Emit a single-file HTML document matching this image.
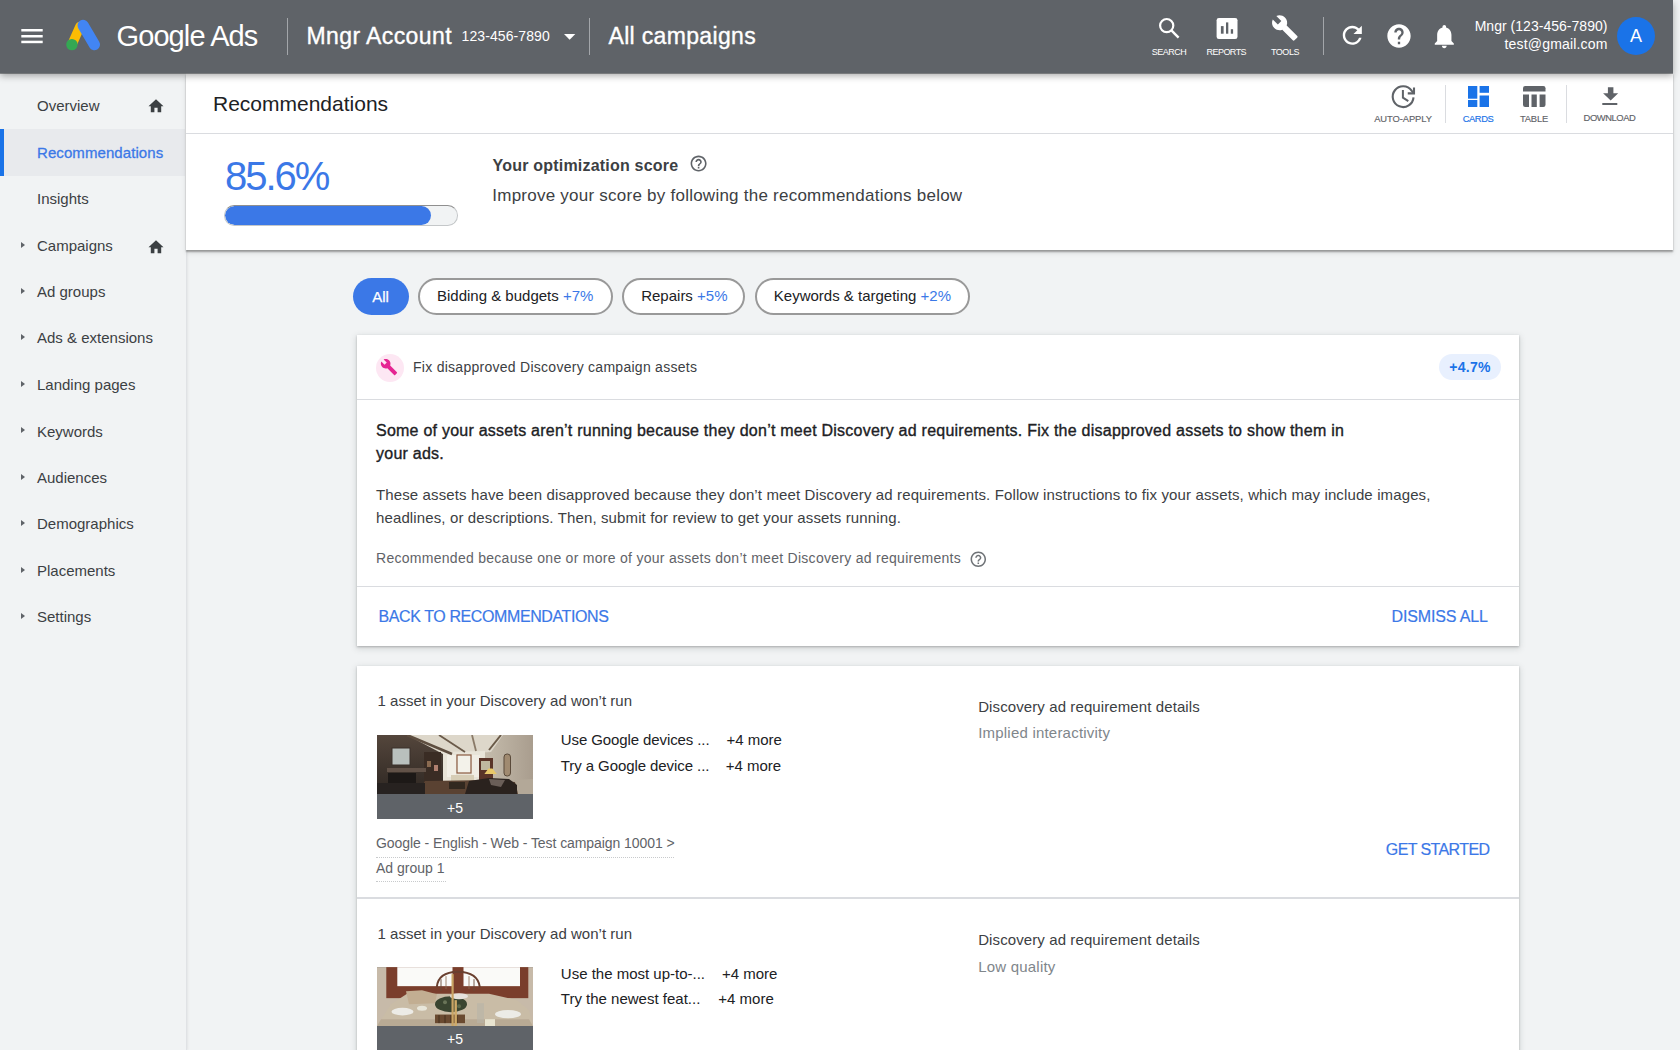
<!DOCTYPE html>
<html><head><meta charset="utf-8">
<style>
*{box-sizing:border-box;margin:0;padding:0}
html,body{width:1680px;height:1050px;overflow:hidden;background:#f1f3f4;font-family:"Liberation Sans",sans-serif;position:relative}
.t{position:absolute;white-space:nowrap;line-height:1}
.s{position:absolute;display:block}
.ph{filter:blur(0.6px)}
#hdr{position:absolute;left:0;top:0;width:1673px;height:73px;background:#5f6368;box-shadow:0 1px 0 rgba(60,64,67,.55),0 3px 7px rgba(0,0,0,.32);z-index:5}
#hdr .t{color:#fff}
.lbl{font-size:9px;color:#fff;text-align:center;width:60px;margin-top:0.6px}
.vd{position:absolute;width:1.2px;background:#a3a6aa}
#side{position:absolute;left:0;top:73px;width:187px;height:977px;background:#f1f3f4;border-right:1px solid #e0e2e5;box-shadow:1px 0 2px rgba(0,0,0,.06);z-index:1}
.nav{font-size:15px;color:#3c4043;left:37px}
.tri{position:absolute;left:21px;width:0;height:0;border-top:3.7px solid transparent;border-bottom:3.7px solid transparent;border-left:4.6px solid #5f6368}
#top{position:absolute;left:185.5px;top:73px;width:1487.5px;height:177px;background:#fff;box-shadow:0 2px 1.5px rgba(0,0,0,.3),0 3px 5px rgba(0,0,0,.1);z-index:2}
#rstrip{position:absolute;left:1673px;top:0;width:7px;height:1050px;background:#f1f3f4;z-index:6;box-shadow:inset 1px 0 2px rgba(0,0,0,.08)}
.tl{font-size:9.4px;color:#5f6368;text-align:center;width:70px;-webkit-text-stroke:0.15px currentColor;margin-top:-0.34px}
.chip{position:absolute;top:278px;height:37px;border:2.3px solid #999;border-radius:19px;background:#fff}
.chip .t{font-size:15px;color:#202124;top:8.3px}
.chip .p{color:#3b78e7}
.card{position:absolute;left:357px;width:1162px;background:#fff;box-shadow:0 1px 2px rgba(60,64,67,.3),0 2px 6px 1px rgba(60,64,67,.15);z-index:1}
.hr{position:absolute;height:1px;background:#dadce0}
</style></head><body>

<div id="hdr">
  <svg class="s" style="left:0;top:0" width="110" height="73">
    <rect x="21.3" y="29" width="21.4" height="2.5" fill="#fff"/>
    <rect x="21.3" y="35" width="21.4" height="2.5" fill="#fff"/>
    <rect x="21.3" y="40.7" width="21.4" height="2.5" fill="#fff"/>
    <!-- logo -->
    <line x1="80" y1="26.5" x2="71.9" y2="44.6" stroke="#fbbc04" stroke-width="9.5" stroke-linecap="round"/>
    <line x1="83.1" y1="25.3" x2="94.4" y2="44.6" stroke="#4285f4" stroke-width="11.2" stroke-linecap="round"/>
    <circle cx="71.9" cy="44.6" r="5.7" fill="#34a853"/>
  </svg>
  <div class="t" style="left:116.5px;top:22.05px;font-size:29px;letter-spacing:-0.9px">Google Ads</div>
  <div class="vd" style="left:287px;top:18px;height:36.5px"></div>
  <div class="t" style="left:306.5px;top:24.9px;font-size:23px;letter-spacing:0.4px;-webkit-text-stroke:0.35px #fff">Mngr Account</div>
  <div class="t" style="left:461.5px;top:29.4px;font-size:14px;letter-spacing:0.1px">123-456-7890</div>
  <svg class="s" style="left:560px;top:30px" width="20" height="14"><polygon points="4,4 15.3,4 9.65,9.8" fill="#fff"/></svg>
  <div class="vd" style="left:589px;top:17.8px;height:36.8px"></div>
  <div class="t" style="left:608.5px;top:25.1px;font-size:23px;letter-spacing:0.33px;-webkit-text-stroke:0.35px #fff">All campaigns</div>

  <!-- search -->
  <svg class="s" style="left:1150px;top:10px" width="40" height="34">
    <circle cx="16.7" cy="15.6" r="6.6" fill="none" stroke="#fff" stroke-width="2.2"/>
    <line x1="21.4" y1="20.4" x2="28.6" y2="27.6" stroke="#fff" stroke-width="2.4"/>
  </svg>
  <div class="t lbl" style="left:1139px;top:47.2px;letter-spacing:-0.5px">SEARCH</div>
  <!-- reports -->
  <svg class="s" style="left:1210px;top:10px" width="34" height="34">
    <rect x="6.6" y="7.9" width="20.9" height="21.1" rx="2.3" fill="#fff"/>
    <rect x="10.9" y="16.1" width="2.7" height="7.6" fill="#5f6368"/>
    <rect x="16" y="12.4" width="2.3" height="11.3" fill="#5f6368"/>
    <rect x="20.8" y="19.2" width="2.3" height="4.5" fill="#5f6368"/>
  </svg>
  <div class="t lbl" style="left:1196.3px;top:47.2px;letter-spacing:-0.55px">REPORTS</div>
  <!-- tools -->
  <svg class="s" style="left:1268px;top:13px" width="34" height="30" viewBox="0 0 34 30">
    <g transform="translate(2.9,1.0) scale(1.16)">
      <path d="M22.7 19l-9.1-9.1c.9-2.3.4-5-1.5-6.9-2-2-5-2.4-7.4-1.3L9 6 6 9 1.6 4.7C.4 7.1.9 10.1 2.9 12.1c1.9 1.9 4.6 2.4 6.9 1.5l9.1 9.1c.4.4 1 .4 1.4 0l2.3-2.3c.5-.4.5-1.1.1-1.4z" fill="#fff"/>
    </g>
  </svg>
  <div class="t lbl" style="left:1255px;top:47.2px;letter-spacing:-0.45px">TOOLS</div>
  <div class="vd" style="left:1323px;top:17px;height:37.7px"></div>
  <!-- refresh -->
  <svg class="s" style="left:1337.8px;top:21.2px" width="28.6" height="28.6" viewBox="0 0 24 24"><path fill="#fff" d="M17.65 6.35C16.2 4.9 14.21 4 12 4c-4.42 0-7.99 3.58-7.99 8s3.57 8 7.99 8c3.73 0 6.84-2.55 7.73-6h-2.08c-.82 2.33-3.04 4-5.65 4-3.31 0-6-2.69-6-6s2.69-6 6-6c1.66 0 3.14.69 4.22 1.78L13 11h7V4l-2.35 2.35z"/></svg>
  <!-- help -->
  <svg class="s" style="left:1384.6px;top:22.1px" width="28" height="28" viewBox="0 0 24 24"><path fill="#fff" d="M12 2C6.48 2 2 6.48 2 12s4.48 10 10 10 10-4.48 10-10S17.52 2 12 2zm1 17h-2v-2h2v2zm2.07-7.75l-.9.92C13.45 12.9 13 13.5 13 15h-2v-.5c0-1.1.45-2.1 1.17-2.83l1.24-1.26c.37-.36.59-.86.59-1.41 0-1.1-.9-2-2-2s-2 .9-2 2H8c0-2.21 1.79-4 4-4s4 1.79 4 4c0 .88-.36 1.68-.93 2.25z"/></svg>
  <!-- bell -->
  <svg class="s" style="left:1430.4px;top:21.7px" width="28.6" height="28.6" viewBox="0 0 24 24"><path fill="#fff" d="M12 22c1.1 0 2-.9 2-2h-4c0 1.1.89 2 2 2zm6-6v-5c0-3.07-1.64-5.64-4.5-6.32V4c0-.83-.67-1.5-1.5-1.5s-1.5.67-1.5 1.5v.68C7.63 5.36 6 7.92 6 11v5l-2 2v1h16v-1l-2-2z"/></svg>
  <div class="t" style="right:65.5px;top:19.05px;font-size:14px;letter-spacing:0.03px">Mngr (123-456-7890)</div>
  <div class="t" style="right:65.5px;top:37.4px;font-size:14px;letter-spacing:0.17px">test@gmail.com</div>
  <div class="s" style="left:1616.8px;top:16.5px;width:38.4px;height:38.4px;border-radius:50%;background:#1a73e8"></div>
  <div class="t" style="left:1616.8px;width:38.4px;text-align:center;top:26.8px;font-size:18px">A</div>
</div>

<div id="side">
  <div class="s" style="left:0;top:55.9px;width:185px;height:47.1px;background:#e8eaed"></div>
  <div class="s" style="left:0;top:55.9px;width:4px;height:47.1px;background:#1a73e8"></div>
</div>
<div id="sidetext" style="position:absolute;left:0;top:0;z-index:3">
  <div class="t nav" style="top:98.3px">Overview</div>
  <div class="t nav" style="top:144.5px;color:#3b78e7;letter-spacing:0.08px;-webkit-text-stroke:0.3px #3b78e7">Recommendations</div>
  <div class="t nav" style="top:191.1px">Insights</div>
  <div class="t nav" style="top:237.6px">Campaigns</div>
  <div class="t nav" style="top:284.1px">Ad groups</div>
  <div class="t nav" style="top:329.8px">Ads &amp; extensions</div>
  <div class="t nav" style="top:377.4px">Landing pages</div>
  <div class="t nav" style="top:423.6px">Keywords</div>
  <div class="t nav" style="top:469.9px">Audiences</div>
  <div class="t nav" style="top:516.2px">Demographics</div>
  <div class="t nav" style="top:563px">Placements</div>
  <div class="t nav" style="top:609.3px">Settings</div>
  <div class="tri" style="top:242px"></div>
  <div class="tri" style="top:288px"></div>
  <div class="tri" style="top:334px"></div>
  <div class="tri" style="top:381px"></div>
  <div class="tri" style="top:427px"></div>
  <div class="tri" style="top:473.5px"></div>
  <div class="tri" style="top:520px"></div>
  <div class="tri" style="top:566.5px"></div>
  <div class="tri" style="top:613px"></div>
  <svg class="s" style="left:146px;top:96px" width="20" height="20" viewBox="0 0 20 20"><path d="M2.5 10.3L10 3.2l7.5 7.1h-2.3v5.9h-3.6v-4.5H8.4v4.5H4.8v-5.9z" fill="#3c4043"/></svg>
  <svg class="s" style="left:146px;top:237px" width="20" height="20" viewBox="0 0 20 20"><path d="M2.5 10.3L10 3.2l7.5 7.1h-2.3v5.9h-3.6v-4.5H8.4v4.5H4.8v-5.9z" fill="#3c4043"/></svg>
</div>

<div id="top">
</div>
<div id="toptext" style="position:absolute;left:0;top:0;z-index:3">
  <div class="t" style="left:213px;top:93.4px;font-size:21px;color:#202124">Recommendations</div>
  <!-- auto-apply -->
  <svg class="s" style="left:1389px;top:83px" width="28" height="28" viewBox="0 0 28 28">
    <path d="M24.5 14.4 A10.4 10.4 0 1 1 22.6 7.6 L25 10.4" fill="none" stroke="#5f6368" stroke-width="2.1"/>
    <polyline points="19.8,10.4 25,10.4 25,5.6" fill="none" stroke="#5f6368" stroke-width="2.1" stroke-linecap="square"/>
    <polyline points="13.9,7.1 13.9,14.6 19.3,18.2" fill="none" stroke="#5f6368" stroke-width="2"/>
  </svg>
  <div class="t tl" style="left:1368px;top:114.7px;letter-spacing:-0.08px">AUTO-APPLY</div>
  <div class="hr" style="left:1445px;top:85px;width:1px;height:38px"></div>
  <!-- cards -->
  <svg class="s" style="left:1467.5px;top:86.2px" width="21.3" height="21" viewBox="0 0 21.3 21">
    <rect x="0" y="0" width="9.3" height="12.7" fill="#1a73e8"/>
    <rect x="0" y="14" width="9.3" height="7" fill="#1a73e8"/>
    <rect x="11.6" y="0" width="9.7" height="6.8" fill="#1a73e8"/>
    <rect x="11.6" y="9.5" width="9.7" height="11.5" fill="#1a73e8"/>
  </svg>
  <div class="t tl" style="left:1443px;top:114.7px;color:#1a73e8;letter-spacing:-0.46px">CARDS</div>
  <!-- table -->
  <svg class="s" style="left:1523.2px;top:86.2px" width="22.5" height="21" viewBox="0 0 22.5 21">
    <path d="M0 2.2Q0 0 2.2 0H20.3Q22.5 0 22.5 2.2V5.55H0z" fill="#5f6368"/>
    <path d="M0 8.5H6V21H2.2Q0 21 0 18.8z" fill="#5f6368"/>
    <rect x="8.5" y="8.5" width="5.3" height="12.5" fill="#5f6368"/>
    <path d="M16.6 8.5H22.5V18.8Q22.5 21 20.3 21H16.6z" fill="#5f6368"/>
  </svg>
  <div class="t tl" style="left:1499px;top:114.5px;letter-spacing:-0.16px">TABLE</div>
  <div class="hr" style="left:1566px;top:85px;width:1px;height:38px"></div>
  <!-- download -->
  <svg class="s" style="left:1600px;top:85px" width="20" height="22" viewBox="0 0 20 22">
    <polygon points="6.4,2.2 11.9,2.2 11.9,8.2 16.7,8.2 9.15,15.5 1.6,8.2 6.4,8.2" fill="#5f6368" transform="translate(1.5,0)"/>
    <rect x="2.3" y="18" width="15" height="2" fill="#5f6368"/>
  </svg>
  <div class="t tl" style="left:1574.5px;top:113.7px;letter-spacing:-0.42px">DOWNLOAD</div>
  <div class="hr" style="left:186px;top:133px;width:1487px"></div>

  <div class="t" style="left:225px;top:156.3px;font-size:40px;letter-spacing:-2px;color:#3b78e7">85.6%</div>
  <div class="s" style="left:224px;top:205px;width:234px;height:20.5px;border-radius:10.25px;background:#f1f3f4;border:1px solid #c4c7c9;border-top-color:#8f8f8f;overflow:hidden">
    <div class="s" style="left:0;top:0;width:206px;height:100%;border-radius:10px;background:#3b78e7"></div>
  </div>
  <div class="t" style="left:492.6px;top:157.6px;font-size:16px;font-weight:bold;color:#3c4043;letter-spacing:0.2px">Your optimization score</div>
  <svg class="s" style="left:689.3px;top:154.4px" width="19.2" height="19.2" viewBox="0 0 24 24"><path fill="#5f6368" d="M11 18h2v-2h-2v2zm1-16C6.48 2 2 6.48 2 12s4.48 10 10 10 10-4.48 10-10S17.52 2 12 2zm0 18c-4.41 0-8-3.59-8-8s3.59-8 8-8 8 3.59 8 8-3.59 8-8 8zm0-14c-2.21 0-4 1.79-4 4h2c0-1.1.9-2 2-2s2 .9 2 2c0 2-3 1.75-3 5h2c0-2.25 3-2.5 3-5 0-2.21-1.79-4-4-4z"/></svg>
  <div class="t" style="left:492.3px;top:186.8px;font-size:17px;color:#3c4043;letter-spacing:0.24px">Improve your score by following the recommendations below</div>
</div>

<div id="main">
  <div class="s" style="left:352.5px;top:278px;width:56px;height:37px;border-radius:18.5px;background:#3b78e7"></div>
  <div class="t" style="left:352.5px;width:56px;text-align:center;top:288.6px;font-size:15px;color:#fff;-webkit-text-stroke:0.25px #fff">All</div>
  <div class="chip" style="left:418.3px;width:195px"><div class="t" style="left:16.7px">Bidding &amp; budgets <span class="p">+7%</span></div></div>
  <div class="chip" style="left:622.2px;width:122.7px"><div class="t" style="left:17px">Repairs <span class="p">+5%</span></div></div>
  <div class="chip" style="left:755.1px;width:215.1px"><div class="t" style="left:16.7px">Keywords &amp; targeting <span class="p">+2%</span></div></div>

  <!-- card 1 -->
  <div class="card" style="top:335px;height:311px"></div>
  <div id="c1" style="position:absolute;left:0;top:0;z-index:2">
    <div class="s" style="left:376px;top:353.6px;width:28px;height:28px;border-radius:50%;background:#fde7f3"></div>
    <svg class="s" style="left:377.2px;top:355.1px" width="24" height="24" viewBox="0 0 24 24"><g transform="translate(12 12) scale(0.74) rotate(0) translate(-12 -12)"><path fill="#e52592" d="M22.7 19l-9.1-9.1c.9-2.3.4-5-1.5-6.9-2-2-5-2.4-7.4-1.3L9 6 6 9 1.6 4.7C.4 7.1.9 10.1 2.9 12.1c1.9 1.9 4.6 2.4 6.9 1.5l9.1 9.1c.4.4 1 .4 1.4 0l2.3-2.3c.5-.4.5-1.1.1-1.4z"/></g></svg>
    <div class="t" style="left:413px;top:360.45px;font-size:14px;color:#3c4043;letter-spacing:0.27px">Fix disapproved Discovery campaign assets</div>
    <div class="s" style="left:1439.2px;top:353.7px;width:61.6px;height:26.6px;border-radius:13.3px;background:#e8f0fe"></div>
    <div class="t" style="left:1439.2px;width:61.6px;text-align:center;top:360.35px;font-size:14px;font-weight:bold;color:#1a73e8;letter-spacing:0.3px">+4.7%</div>
    <div class="hr" style="left:357px;top:399px;width:1162px"></div>
    <div class="t" style="left:376px;top:423.2px;font-size:16px;color:#202124;letter-spacing:0.24px;-webkit-text-stroke:0.35px #202124">Some of your assets aren’t running because they don’t meet Discovery ad requirements. Fix the disapproved assets to show them in</div>
    <div class="t" style="left:376px;top:446px;font-size:16px;color:#202124;letter-spacing:0.24px;-webkit-text-stroke:0.35px #202124">your ads.</div>
    <div class="t" style="left:376px;top:487.4px;font-size:15px;color:#3c4043;letter-spacing:0.126px">These assets have been disapproved because they don’t meet Discovery ad requirements. Follow instructions to fix your assets, which may include images,</div>
    <div class="t" style="left:376px;top:509.9px;font-size:15px;color:#3c4043;letter-spacing:0.126px">headlines, or descriptions. Then, submit for review to get your assets running.</div>
    <div class="t" style="left:376px;top:550.95px;font-size:14px;color:#5f6368;letter-spacing:0.28px">Recommended because one or more of your assets don’t meet Discovery ad requirements</div>
    <svg class="s" style="left:968.65px;top:549.7px" width="18.6" height="18.6" viewBox="0 0 24 24"><path fill="#6f7377" d="M11 18h2v-2h-2v2zm1-16C6.48 2 2 6.48 2 12s4.48 10 10 10 10-4.48 10-10S17.52 2 12 2zm0 18c-4.41 0-8-3.59-8-8s3.59-8 8-8 8 3.59 8 8-3.59 8-8 8zm0-14c-2.21 0-4 1.79-4 4h2c0-1.1.9-2 2-2s2 .9 2 2c0 2-3 1.75-3 5h2c0-2.25 3-2.5 3-5 0-2.21-1.79-4-4-4z"/></svg>
    <div class="hr" style="left:357px;top:586px;width:1162px"></div>
    <div class="t" style="left:378.5px;top:609.2px;font-size:16px;color:#3b78e7;letter-spacing:-0.4px;-webkit-text-stroke:0.2px #3b78e7">BACK TO RECOMMENDATIONS</div>
    <div class="t" style="left:1391.5px;top:609.2px;font-size:16px;color:#3b78e7;letter-spacing:-0.14px;-webkit-text-stroke:0.2px #3b78e7">DISMISS ALL</div>
  </div>

  <!-- card 2 -->
  <div class="card" style="top:665.5px;height:400px"></div>
  <div id="c2" style="position:absolute;left:0;top:0;z-index:2">
    <div class="t" style="left:377.5px;top:693.2px;font-size:15px;color:#3c4043;letter-spacing:0.03px">1 asset in your Discovery ad won’t run</div>
    <div class="s" style="left:377px;top:735px;width:156px;height:84.3px;background:#5f6368;overflow:hidden">
      <svg class="s ph" style="left:0;top:0" width="156" height="59" viewBox="0 0 156 59">
        <defs>
          <linearGradient id="gw" x1="0" y1="0" x2="1" y2="0"><stop offset="0" stop-color="#cfc7b8"/><stop offset="0.7" stop-color="#c4bbab"/><stop offset="1" stop-color="#a99d8e"/></linearGradient>
          <linearGradient id="gl" x1="0" y1="0" x2="0" y2="1"><stop offset="0" stop-color="#54463c"/><stop offset="1" stop-color="#2e2722"/></linearGradient>
        </defs>
        <rect width="156" height="59" fill="url(#gw)"/>
        <polygon points="28,0 126,0 114,17 66,20" fill="#ddd7ca"/>
        <polygon points="64,17 108,16 108,47 64,47" fill="#e8e4d8"/><rect x="70" y="20" width="9" height="22" fill="#f2efe6"/><rect x="95" y="20" width="8" height="22" fill="#f0ede4"/>
        <polygon points="0,0 30,0 66,19 66,52 0,59" fill="url(#gl)"/>
        <line x1="30" y1="0" x2="75" y2="19" stroke="#5e4e40" stroke-width="2.5"/>
        <line x1="62" y1="0" x2="88" y2="17" stroke="#6a5a4a" stroke-width="1.8"/>
        <line x1="95" y1="0" x2="99" y2="16" stroke="#8a7a68" stroke-width="1.8"/>
        <line x1="124" y1="0" x2="112" y2="15" stroke="#6a5a48" stroke-width="2"/>
        <rect x="15" y="13" width="18" height="17" fill="#b9c0bd" stroke="#3a302a" stroke-width="1"/>
        <rect x="47" y="17" width="17" height="34" fill="#3a2c24"/>
        <rect x="50" y="26" width="4" height="6" fill="#8a6a50"/><rect x="57" y="30" width="4" height="6" fill="#b08070"/>
        <rect x="10" y="33" width="39" height="4" fill="#625248"/>
        <rect x="11" y="38" width="28" height="21" fill="#1d1917"/>
        <rect x="80" y="20" width="14" height="18" fill="#f3f2ea" stroke="#8a5a40" stroke-width="1.2"/>
        <rect x="102" y="23" width="14" height="24" fill="#5a3428"/>
        <rect x="104" y="26" width="9" height="9" fill="#c0b8a0"/>
        <rect x="127" y="19" width="6.5" height="22" rx="3" fill="#a08a70" stroke="#5a4a3a" stroke-width="1"/>
        <polygon points="107.4,39 119.8,39 115.5,33.6 111.5,33.6" fill="#e8c86a"/>
        <rect x="74" y="40" width="23" height="6" fill="#d6cdb6"/>
        <polygon points="48,46 112,45 138,47 142,59 40,59" fill="#5a4232"/><polygon points="138,45 156,44 156,59 141,59" fill="#b3a898"/>
        <rect x="72" y="47" width="16" height="7" fill="#32281f"/>
        <polygon points="92,46 112,43 132,44 140,50 140,59 88,59" fill="#2a221e"/>
        <polygon points="112,44 128,45 124,52 114,50" fill="#6a5e58"/>
        <rect x="0" y="48" width="48" height="11" fill="#272220"/>
      </svg>
    </div>
    <div class="t" style="left:377px;width:156px;text-align:center;top:800.65px;font-size:14px;color:#fff">+5</div>
    <div class="t" style="left:560.8px;top:732.4px;font-size:15px;color:#202124;letter-spacing:-0.1px">Use Google devices ...</div>
    <div class="t" style="left:726.5px;top:732.4px;font-size:15px;color:#202124">+4 more</div>
    <div class="t" style="left:560.8px;top:757.7px;font-size:15px;color:#202124;letter-spacing:-0.08px">Try a Google device ...</div>
    <div class="t" style="left:725.7px;top:757.7px;font-size:15px;color:#202124">+4 more</div>
    <div class="t" style="left:376px;top:836.2px;font-size:14px;color:#5f6368;letter-spacing:-0.07px">Google - English - Web - Test campaign 10001 &gt;</div>
    <div class="s" style="left:376px;top:856.5px;width:298px;height:1px;border-top:1px dotted #c8cacc"></div>
    <div class="t" style="left:376px;top:861.35px;font-size:14px;color:#5f6368">Ad group 1</div>
    <div class="s" style="left:376px;top:881.3px;width:70px;height:1px;border-top:1px dotted #c8cacc"></div>
    <div class="t" style="left:978.2px;top:698.7px;font-size:15px;color:#3c4043;letter-spacing:0.1px">Discovery ad requirement details</div>
    <div class="t" style="left:978.2px;top:725.2px;font-size:15px;color:#80868b;letter-spacing:0.21px">Implied interactivity</div>
    <div class="t" style="left:1385.8px;top:842.2px;font-size:16px;color:#3b78e7;letter-spacing:-0.6px;-webkit-text-stroke:0.2px #3b78e7">GET STARTED</div>
    <div class="hr" style="left:357px;top:897.2px;width:1162px;height:1.5px"></div>

    <div class="t" style="left:377.5px;top:926.3px;font-size:15px;color:#3c4043;letter-spacing:0.03px">1 asset in your Discovery ad won’t run</div>
    <div class="s" style="left:377px;top:967px;width:156px;height:90px;background:#5f6368;overflow:hidden">
      <svg class="s ph" style="left:0;top:0" width="156" height="59.3" viewBox="0 0 156 59">
        <rect width="156" height="59" fill="#c7baa9"/>
        <rect x="9.3" y="0" width="142" height="31" fill="#7a3e2c"/>
        <rect x="20.3" y="0" width="55.2" height="19" fill="#fafaf8"/>
        <rect x="86.5" y="0" width="56.5" height="19" fill="#fafaf8"/>
        <path d="M59.8 20 Q61 5 80.9 4.6 Q101 5 102.8 20" fill="none" stroke="#6a4030" stroke-width="2"/><line x1="64" y1="12" x2="64" y2="24" stroke="#6a4a38" stroke-width="0.9"/><line x1="97" y1="12" x2="97" y2="24" stroke="#6a4a38" stroke-width="0.9"/>
        <line x1="69" y1="9" x2="69" y2="22" stroke="#8a6a50" stroke-width="0.8"/><line x1="92" y1="9" x2="92" y2="22" stroke="#8a6a50" stroke-width="0.8"/>
        <polygon points="0,59 14,37 30,26.5 112,26.5 140,33 152,43 156,59" fill="#c9bca6"/><polygon points="0,59 4,52 152,52 156,59" fill="#b8aa94"/>
        <polygon points="29,24 45,23 60,27 58,36 32,37" fill="#c2ae92"/>
        <ellipse cx="74" cy="37" rx="16" ry="8" fill="#3a4530"/><circle cx="68" cy="35" r="2" fill="#6a7458"/><circle cx="82" cy="39" r="2" fill="#5e6a4c"/>
        <ellipse cx="82" cy="29" rx="9" ry="3" fill="#e6e2dc"/>
        <ellipse cx="25.5" cy="44.5" rx="11" ry="3.8" fill="#ecebe6"/>
        <ellipse cx="131" cy="47" rx="13" ry="4.2" fill="#ecebe6"/>
        <rect x="58" y="47.4" width="30" height="8.6" fill="#6a4a30"/>
        <line x1="62" y1="48" x2="62" y2="56" stroke="#3a2818" stroke-width="0.8"/><line x1="68" y1="48" x2="68" y2="56" stroke="#3a2818" stroke-width="0.8"/><line x1="74" y1="48" x2="74" y2="56" stroke="#3a2818" stroke-width="0.8"/><line x1="80" y1="48" x2="80" y2="56" stroke="#3a2818" stroke-width="0.8"/>
        <rect x="74.5" y="7" width="2.2" height="52" fill="#c9a464"/>
        <rect x="77.5" y="33" width="2.4" height="26" fill="#d0aa68"/>
        <ellipse cx="45" cy="41" rx="5" ry="2.5" fill="#e8e6da"/>
        <rect x="100" y="36" width="7" height="20" fill="#b8b4a8" opacity="0.6"/>
        <rect x="108" y="52" width="10" height="7" fill="#e8e4d0"/>
      </svg>
    </div>
    <div class="t" style="left:377px;width:156px;text-align:center;top:1032.45px;font-size:14px;color:#fff">+5</div>
    <div class="t" style="left:560.8px;top:966.3px;font-size:15px;color:#202124">Use the most up-to-...</div>
    <div class="t" style="left:722px;top:966.3px;font-size:15px;color:#202124">+4 more</div>
    <div class="t" style="left:560.8px;top:990.9px;font-size:15px;color:#202124">Try the newest feat...</div>
    <div class="t" style="left:718.3px;top:990.9px;font-size:15px;color:#202124">+4 more</div>
    <div class="t" style="left:978.2px;top:931.7px;font-size:15px;color:#3c4043;letter-spacing:0.1px">Discovery ad requirement details</div>
    <div class="t" style="left:978.2px;top:958.8px;font-size:15px;color:#80868b;letter-spacing:0.21px">Low quality</div>
  </div>
</div>


</body></html>
